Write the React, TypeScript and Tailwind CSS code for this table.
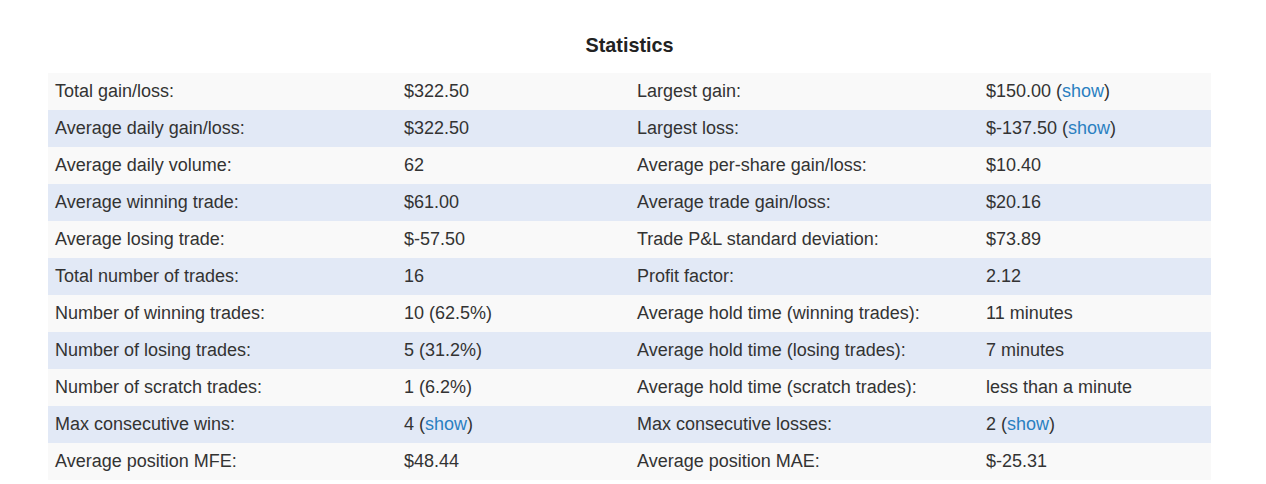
import React from 'react';

type Cell = { text: string; show?: boolean };
type Row = [string, Cell, string, Cell];

const rows: Row[] = [
    ['Total gain/loss:', { text: '$322.50' }, 'Largest gain:', { text: '$150.00', show: true }],
    ['Average daily gain/loss:', { text: '$322.50' }, 'Largest loss:', { text: '$-137.50', show: true }],
    ['Average daily volume:', { text: '62' }, 'Average per-share gain/loss:', { text: '$10.40' }],
    ['Average winning trade:', { text: '$61.00' }, 'Average trade gain/loss:', { text: '$20.16' }],
    ['Average losing trade:', { text: '$-57.50' }, 'Trade P&L standard deviation:', { text: '$73.89' }],
    ['Total number of trades:', { text: '16' }, 'Profit factor:', { text: '2.12' }],
    ['Number of winning trades:', { text: '10 (62.5%)' }, 'Average hold time (winning trades):', { text: '11 minutes' }],
    ['Number of losing trades:', { text: '5 (31.2%)' }, 'Average hold time (losing trades):', { text: '7 minutes' }],
    ['Number of scratch trades:', { text: '1 (6.2%)' }, 'Average hold time (scratch trades):', { text: 'less than a minute' }],
    ['Max consecutive wins:', { text: '4', show: true }, 'Max consecutive losses:', { text: '2', show: true }],
    ['Average position MFE:', { text: '$48.44' }, 'Average position MAE:', { text: '$-25.31' }],
];

const Value = ({ cell }: { cell: Cell }) => (
    <>
        {cell.text}
        {cell.show && (
            <>
                {' ('}
                <span className="text-[#2a7fc1] cursor-pointer">show</span>
                {')'}
            </>
        )}
    </>
);

const App = (): JSX.Element => {
    return (
        <div className="bg-white min-h-[484px] pl-[48px] pt-[32px] font-['Liberation_Sans',Arial,sans-serif] text-[#333]">
            <div className="w-[1163px]">
                <h2 className="text-center text-[19.8px] font-bold leading-[26px] text-[#222] mb-[15px]">
                    Statistics
                </h2>
                <table className="w-full border-collapse text-[18px]">
                    <colgroup>
                        <col className="w-[349px]" />
                        <col className="w-[233px]" />
                        <col className="w-[349px]" />
                        <col className="w-[232px]" />
                    </colgroup>
                    <tbody>
                        {rows.map((row, i) => (
                            <tr key={i} className={i % 2 === 0 ? 'bg-[#f9f9f9]' : 'bg-[#e2e9f6]'}>
                                <td className="h-[37px] px-[7px] pt-0 pb-[1px] leading-[22px]">{row[0]}</td>
                                <td className="h-[37px] px-[7px] pt-0 pb-[1px] leading-[22px]"><Value cell={row[1]} /></td>
                                <td className="h-[37px] px-[7px] pt-0 pb-[1px] leading-[22px]">{row[2]}</td>
                                <td className="h-[37px] px-[7px] pt-0 pb-[1px] leading-[22px]"><Value cell={row[3]} /></td>
                            </tr>
                        ))}
                    </tbody>
                </table>
            </div>
        </div>
    );
};

export default App;
